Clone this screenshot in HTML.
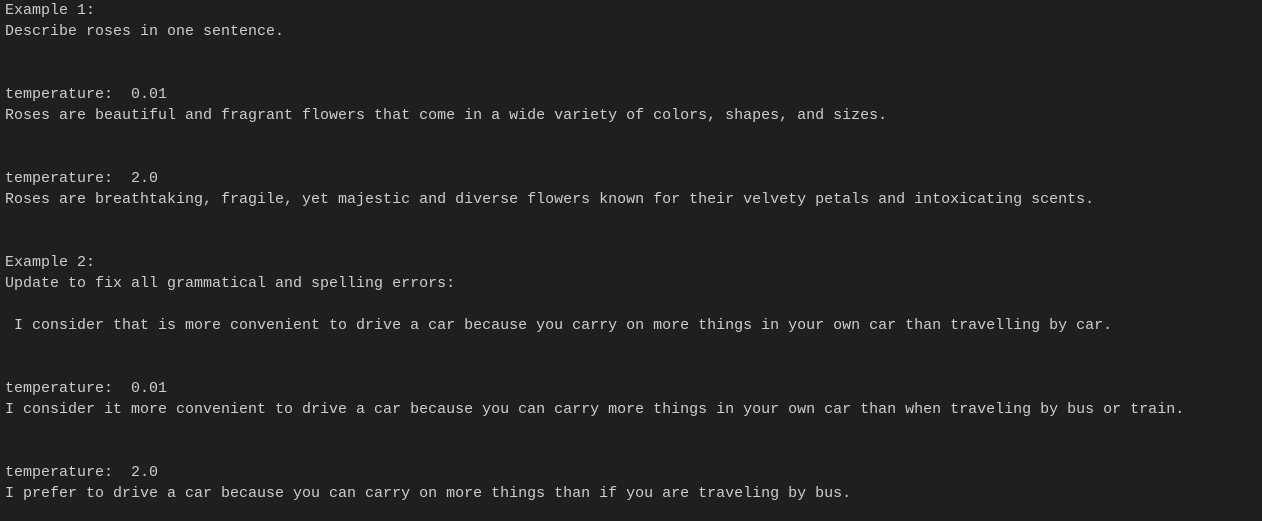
<!DOCTYPE html>
<html><head><meta charset="utf-8"><style>
html,body{margin:0;padding:0;background:#1f1f1f;width:1262px;height:521px;overflow:hidden}
pre{margin:0;padding:0 0 0 5px;font-family:"Liberation Mono",monospace;font-size:15px;line-height:21px;color:#cccccc;white-space:pre}
</style></head><body><pre>Example 1:
Describe roses in one sentence.


temperature:  0.01
Roses are beautiful and fragrant flowers that come in a wide variety of colors, shapes, and sizes.


temperature:  2.0
Roses are breathtaking, fragile, yet majestic and diverse flowers known for their velvety petals and intoxicating scents.


Example 2:
Update to fix all grammatical and spelling errors:

 I consider that is more convenient to drive a car because you carry on more things in your own car than travelling by car.


temperature:  0.01
I consider it more convenient to drive a car because you can carry more things in your own car than when traveling by bus or train.


temperature:  2.0
I prefer to drive a car because you can carry on more things than if you are traveling by bus.</pre></body></html>
